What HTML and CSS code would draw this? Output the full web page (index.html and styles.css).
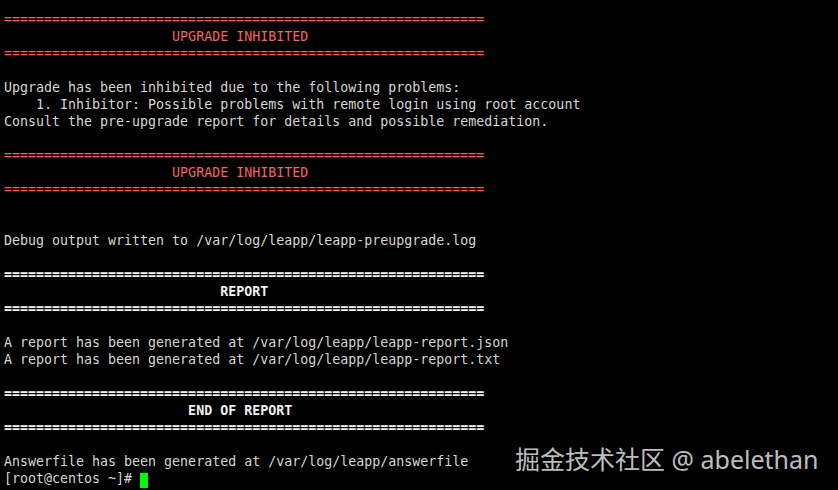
FILE: index.html
```html
<!DOCTYPE html>
<html lang="en">
<head>
  <meta charset="UTF-8">
  <meta name="viewport" content="width=device-width, initial-scale=1.0">
  <title>leapp preupgrade</title>
  <link rel="stylesheet" href="styles.css">
</head>
<body>
  <div class="terminal">
<pre class="screen"><span class="red">============================================================</span>
<span class="red">                     UPGRADE INHIBITED</span>
<span class="red">============================================================</span>

Upgrade has been inhibited due to the following problems:
    1. Inhibitor: Possible problems with remote login using root account
Consult the pre-upgrade report for details and possible remediation.

<span class="red">============================================================</span>
<span class="red">                     UPGRADE INHIBITED</span>
<span class="red">============================================================</span>


Debug output written to /var/log/leapp/leapp-preupgrade.log

<span class="bold">============================================================</span>
<span class="bold">                           REPORT</span>
<span class="bold">============================================================</span>

A report has been generated at /var/log/leapp/leapp-report.json
A report has been generated at /var/log/leapp/leapp-report.txt

<span class="bold">============================================================</span>
<span class="bold">                       END OF REPORT</span>
<span class="bold">============================================================</span>

Answerfile has been generated at /var/log/leapp/answerfile
[root@centos ~]# <span class="cursor"> </span></pre>
    <div class="watermark">掘金技术社区 @ abelethan</div>
  </div>
</body>
</html>
```

FILE: styles.css
```css
html, body {
  margin: 0;
  background: #000;
}

.terminal {
  position: relative;
  width: 838px;
  height: 490px;
  overflow: hidden;
  background: #000;
}

.screen {
  margin: 0;
  padding: 11px 0 0 4px;
  font-family: 'DejaVu Sans Mono', 'Liberation Mono', monospace;
  font-size: 13.3px;
  line-height: 17px;
  color: #d6d6d6;
}

.red {
  color: #f46262;
}

.bold {
  color: #f2f2f2;
  font-weight: bold;
}

.cursor {
  display: inline-block;
  width: 8px;
  height: 15px;
  vertical-align: -3px;
  background: #0f0;
}

.watermark {
  position: absolute;
  left: 515px;
  top: 440px;
  font-family: 'Noto Sans', 'Noto Sans CJK SC', sans-serif;
  font-size: 25px;
  color: rgba(225, 225, 225, 0.85);
  white-space: nowrap;
}
```
